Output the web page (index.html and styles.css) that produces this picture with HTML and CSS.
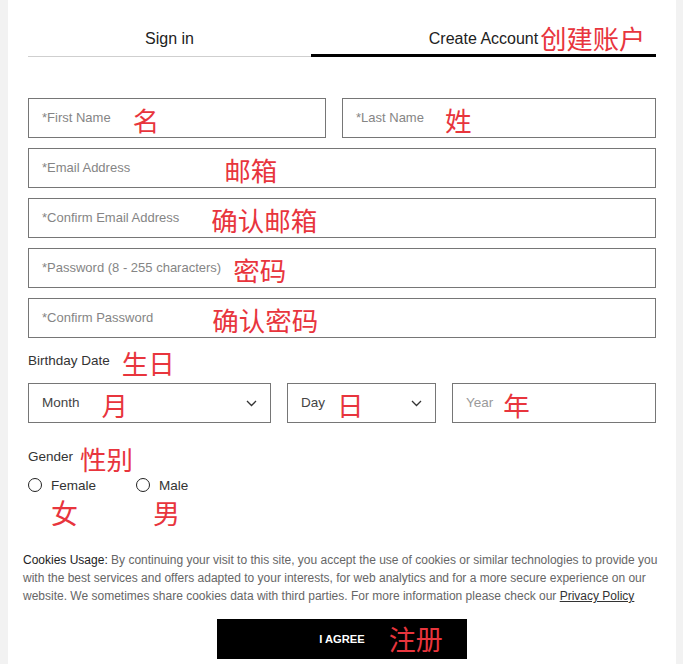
FILE: index.html
```html
<!DOCTYPE html>
<html lang="en">
<head>
<meta charset="utf-8">
<title>Create Account</title>
<link rel="stylesheet" href="styles.css">
</head>
<body>
<div class="panel">
  <div class="form">
    <div class="tabs">
      <div class="tab tab-signin"><span class="tab-label">Sign in</span></div>
      <div class="tab tab-create"><span class="tab-label">Create Account<span class="note note-tab">创建账户</span></span></div>
    </div>

    <div class="fields">
      <div class="row-names">
        <div class="field"><span class="ph">*First Name</span><span class="note n-first">名</span></div>
        <div class="field"><span class="ph">*Last Name</span><span class="note n-last">姓</span></div>
      </div>
      <div class="field"><span class="ph">*Email Address</span><span class="note n-email">邮箱</span></div>
      <div class="field"><span class="ph">*Confirm Email Address</span><span class="note n-cemail">确认邮箱</span></div>
      <div class="field"><span class="ph">*Password (8 - 255 characters)</span><span class="note n-pass">密码</span></div>
      <div class="field"><span class="ph">*Confirm Password</span><span class="note n-cpass">确认密码</span></div>
    </div>

    <div class="label-row label-birthday"><span class="label">Birthday Date</span><span class="note n-bday">生日</span></div>
    <div class="row-date">
      <div class="select"><span class="val">Month</span><span class="note n-month">月</span>
        <svg class="chev" width="11" height="7" viewBox="0 0 11 7"><polyline points="1,1 5.5,5.5 10,1" fill="none" stroke="#333" stroke-width="1.3"/></svg></div>
      <div class="select"><span class="val">Day</span><span class="note n-day">日</span>
        <svg class="chev" width="11" height="7" viewBox="0 0 11 7"><polyline points="1,1 5.5,5.5 10,1" fill="none" stroke="#333" stroke-width="1.3"/></svg></div>
      <div class="select"><span class="val val-muted">Year</span><span class="note n-year">年</span></div>
    </div>

    <div class="label-row label-gender"><span class="label">Gender</span><span class="note n-gender">性别</span></div>
    <div class="radios">
      <label class="radio radio-female"><span class="circle"></span><span>Female</span></label>
      <label class="radio"><span class="circle"></span><span>Male</span></label>
    </div>
    <div class="gender-notes"><span class="note n-female">女</span><span class="note n-male">男</span></div>
  </div>

  <div class="cookies">
    <p class="cookie-text"><span class="cookie-title">Cookies Usage:</span> By continuing your visit to this site, you accept the use of cookies or similar technologies to provide you with the best services and offers adapted to your interests, for web analytics and for a more secure experience on our website. We sometimes share cookies data with third parties. For more information please check our <a href="#">Privacy Policy</a></p>
    <div class="btn-wrap"><button class="agree"><span class="agree-label">I AGREE<span class="note n-agree">注册</span></span></button></div>
  </div>
</div>
</body>
</html>
```
FILE: styles.css
```css
* { box-sizing: border-box; }
html, body { margin: 0; padding: 0; }
body {
  background: #f2f2f2;
  font-family: "Liberation Sans", Arial, sans-serif;
  color: #222;
}
.panel {
  margin: 0 7px 0 8px;
  background: #fff;
  height: 664px;
  overflow: hidden;
}
.form { padding: 0 20px; }

.note {
  font-family: "Noto Sans CJK SC", "Noto Sans", sans-serif;
  color: #e8353d;
  font-size: 26.5px;
  line-height: 1;
  white-space: nowrap;
}

/* tabs */
.tabs { display: flex; align-items: flex-end; }
.tab {
  text-align: center;
  font-size: 16px;
  line-height: 20px;
  padding-top: 29px;
  color: #222;
}
.tab-signin { width: 283px; border-bottom: 1px solid #cfcfcf; padding-bottom: 7px; }
.tab-create { flex: 1; border-bottom: 3px solid #000; padding-bottom: 5px; }
.tab-label { position: relative; display: inline-block; }
.note-tab { position: absolute; left: 100%; top: -4px; margin-left: 2px; font-size: 26.3px; }

/* fields */
.fields { margin-top: 41px; display: flex; flex-direction: column; gap: 10px; }
.row-names { display: grid; grid-template-columns: 298px 1fr; gap: 16px; }
.field, .select {
  height: 40px;
  border: 1px solid #767676;
  display: flex;
  align-items: center;
  padding: 0 13px;
  white-space: nowrap;
}
.ph { font-size: 13px; color: #858585; margin-top: -1px; }
.field .note, .select .note { margin-top: 5px; }
.n-first { margin-left: 22px; }
.n-last { margin-left: 21px; }
.n-email { margin-left: 94px; }
.n-cemail { margin-left: 32px; }
.n-pass { margin-left: 12px; }
.n-cpass { margin-left: 59px; }

/* labels */
.label-row { display: flex; align-items: center; }
.label { font-size: 13.5px; line-height: 16px; color: #333; }
.label-row .note { margin-top: 5px; }
.label-birthday { margin-top: 15px; height: 16px; }
.n-bday { margin-left: 12px; }
.label-gender { margin-top: 26px; height: 16px; }
.n-gender { margin-left: 7px; margin-top: 2px; }

/* date */
.row-date { margin-top: 14px; display: grid; grid-template-columns: 243px 149px 1fr; gap: 16px; }
.val { font-size: 13.5px; color: #444; margin-top: -1px; }
.val-muted { color: #9a9a9a; }
.n-month { margin-left: 22px; }
.n-day { margin-left: 12px; }
.n-year { margin-left: 10px; }
.chev { margin-left: auto; display: block; }

/* gender */
.radios { margin-top: 12px; display: flex; align-items: center; height: 16px; }
.radio { display: flex; align-items: center; gap: 9px; font-size: 13.5px; color: #333; }
.radio-female { margin-right: 40px; }
.circle {
  width: 14px; height: 14px;
  border: 1.4px solid #222;
  border-radius: 50%;
  display: inline-block;
}
.gender-notes { margin-top: 6px; display: flex; }
.n-female { margin-left: 23px; font-size: 27px; }
.n-male { margin-left: 75px; font-size: 27px; }

/* cookies */
.cookies { padding: 0 15px; margin-top: 25px; }
.cookie-text {
  margin: 0;
  font-size: 12px;
  line-height: 18px;
  color: #666;
}
.cookie-title { color: #222; }
.cookie-text a { color: #333; text-decoration: underline; }
.btn-wrap { display: flex; justify-content: center; margin-top: 14px; }
.agree {
  width: 250px; height: 40px;
  background: #000;
  border: 0;
  color: #fff;
  font-family: "Liberation Sans", Arial, sans-serif;
  font-weight: bold;
  font-size: 11.2px;
  padding: 0;
}
.agree-label { position: relative; display: inline-block; }
.n-agree { position: absolute; left: 100%; top: -8px; margin-left: 24px; font-size: 27px; font-weight: normal; }
```
